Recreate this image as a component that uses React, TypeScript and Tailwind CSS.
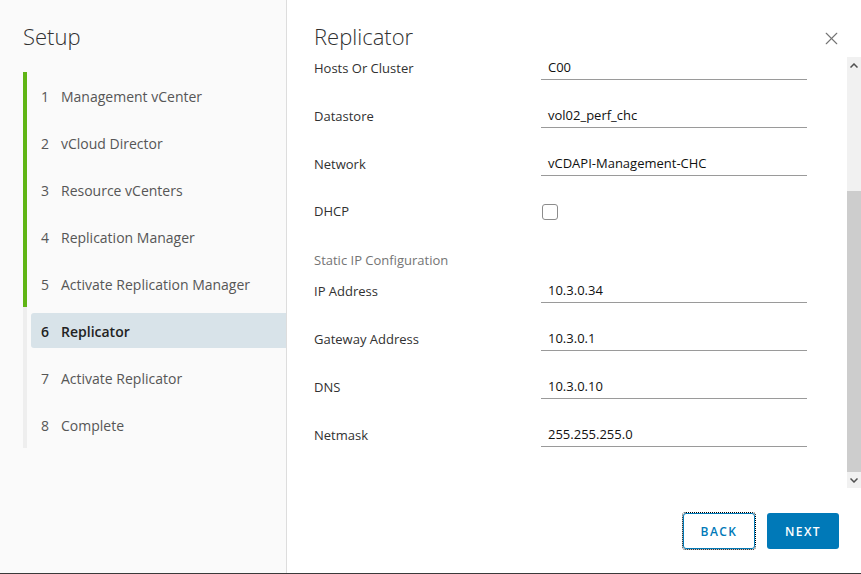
import { X } from "lucide-react";

const steps = [
  { n: 1, label: "Management vCenter", done: true },
  { n: 2, label: "vCloud Director", done: true },
  { n: 3, label: "Resource vCenters", done: true },
  { n: 4, label: "Replication Manager", done: true },
  { n: 5, label: "Activate Replication Manager", done: true },
  { n: 6, label: "Replicator", active: true },
  { n: 7, label: "Activate Replicator" },
  { n: 8, label: "Complete" },
];

const topFields = [
  { label: "Hosts Or Cluster", value: "C00" },
  { label: "Datastore", value: "vol02_perf_chc" },
  { label: "Network", value: "vCDAPI-Management-CHC" },
];

const ipFields = [
  { label: "IP Address", value: "10.3.0.34" },
  { label: "Gateway Address", value: "10.3.0.1" },
  { label: "DNS", value: "10.3.0.10" },
  { label: "Netmask", value: "255.255.255.0" },
];

function Field({ label, value }: { label: string; value: string }) {
  return (
    <div className="flex h-[48px] items-start">
      <div className="w-[227px] h-[22px] pt-[1px] flex items-center text-[13px] text-[#313131]">{label}</div>
      <div className="w-[266px] h-[23px] border-b border-[#9a9a9a] flex items-center pl-[7px] pb-[1px] text-[13px] text-[#111]">
        {value}
      </div>
    </div>
  );
}

export default function App() {
  return (
    <div className="w-[861px] h-[574px] flex bg-white border-b border-[#3a3a3a] font-['Open_Sans',sans-serif] overflow-hidden">
      {/* Steps sidebar */}
      <aside className="w-[287px] shrink-0 bg-[#fafafa] border-r border-[#dddddd] flex flex-col">
        <h1 className="pl-[23px] pt-[20px] h-[52px] leading-[32px] text-[22px] font-light text-[#313131]">Setup</h1>
        <ol className="mt-[20px] ml-[23px]">
          {steps.map((s) => (
            <li
              key={s.n}
              className={`border-l-[4px] py-[6px] pl-[4px] ${s.done ? "border-[#60b515]" : "border-[#eeeeee]"}`}
            >
              <div
                className={`h-[35px] flex items-center pl-[10px] pt-[2px] rounded-l-[3px] text-[14px] ${
                  s.active ? "bg-[#d8e3e9] text-[#222] font-semibold" : "text-[#565656]"
                }`}
              >
                <span className="w-[20px]">{s.n}</span>
                {s.label}
              </div>
            </li>
          ))}
        </ol>
      </aside>

      {/* Content */}
      <main className="flex-1 flex flex-col min-w-0">
        <header className="h-[57px] flex items-start justify-between pl-[27px] pr-[19px] pt-[20px]">
          <h2 className="leading-[32px] text-[22px] font-light text-[#313131]">Replicator</h2>
          <X className="w-[21px] h-[21px] mt-[8px] text-[#747474]" strokeWidth={1.3} />
        </header>

        <div className="h-[431px] flex">
          <div className="flex-1 pl-[27px]">
            {topFields.map((f) => (
              <Field key={f.label} {...f} />
            ))}
            <div className="flex h-[48px] items-start">
              <div className="w-[228px] h-[22px] flex items-center text-[13px] text-[#313131]">DHCP</div>
              <div className="mt-[3px] w-[16px] h-[16px] border border-[#8c8c8c] rounded-[3px] bg-white" />
            </div>
            <div className="h-[31px] pt-[1px] leading-[20px] text-[13px] text-[#747474]">Static IP Configuration</div>
            {ipFields.map((f) => (
              <Field key={f.label} {...f} />
            ))}
          </div>

          {/* Scrollbar */}
          <div className="w-[14px] bg-[#f1f1f1] flex flex-col">
            <div className="h-[17px] flex items-center justify-center">
              <svg width="8" height="5" viewBox="0 0 8 5">
                <path d="M0.5 4.5 L4 1 L7.5 4.5" stroke="#505050" strokeWidth="1.5" fill="none" />
              </svg>
            </div>
            <div className="h-[117px]" />
            <div className="flex-1 bg-[#cdcdcd]" />
            <div className="h-[16px] flex items-center justify-center">
              <svg width="8" height="5" viewBox="0 0 8 5">
                <path d="M0.5 0.5 L4 4 L7.5 0.5" stroke="#505050" strokeWidth="1.5" fill="none" />
              </svg>
            </div>
          </div>
        </div>

        <footer className="flex-1 flex justify-end items-start gap-[12px] pt-[25px] pr-[22px]">
          <button className="w-[72px] h-[36px] pt-[2px] rounded-[3px] border border-[#0079b8] bg-white text-[#0079b8] text-[12px] font-semibold tracking-[0.12em] outline outline-1 outline-dotted outline-black outline-offset-0">
            BACK
          </button>
          <button className="w-[72px] h-[36px] pt-[2px] rounded-[3px] bg-[#0079b8] text-white text-[12px] font-semibold tracking-[0.12em]">
            NEXT
          </button>
        </footer>
      </main>
    </div>
  );
}
